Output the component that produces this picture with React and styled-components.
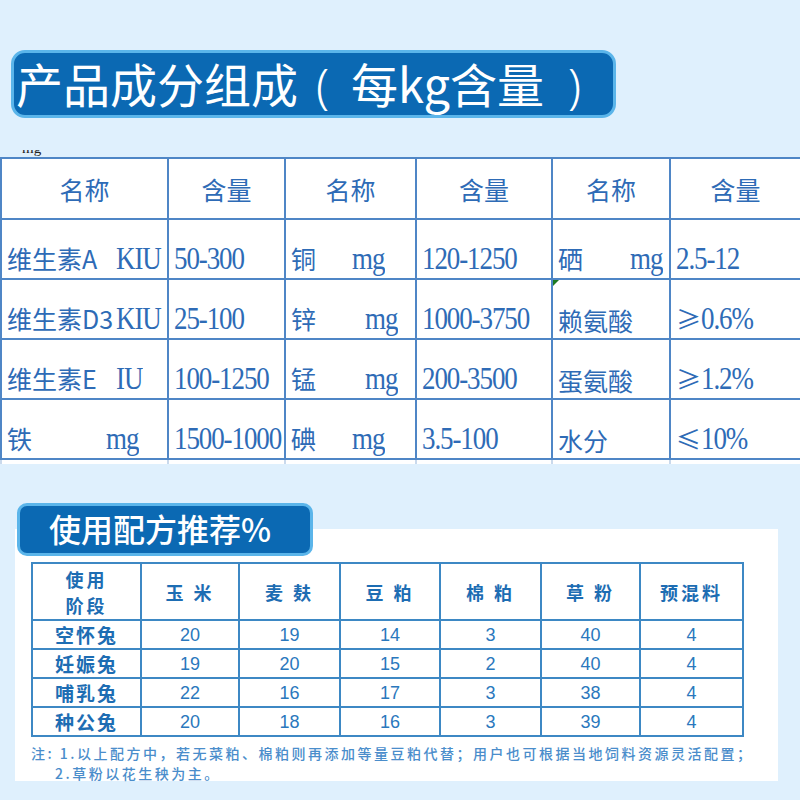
import React from 'react'
import styled, { createGlobalStyle } from 'styled-components'

const GlobalStyle = createGlobalStyle`
  html, body {
    margin: 0;
    padding: 0;
    background: #dff0fd;
  }
  body {
    font-family: "Noto Sans CJK SC", "Noto Sans", sans-serif;
  }
`

const Page = styled.div`
  width: 800px;
  height: 800px;
  overflow: hidden;
  box-sizing: border-box;
  padding-top: 50px;
  background: #dff0fd;
`

const TitleBanner = styled.h1`
  margin: 0 0 0 11px;
  width: 605px;
  height: 68px;
  box-sizing: border-box;
  padding-left: 2px;
  background: #0b69b3;
  border: 3px solid #5bb5ea;
  border-radius: 14px;
  color: #fff;
  font-size: 47px;
  font-weight: 400;
  line-height: 60px;
  white-space: nowrap;
`

const Paren = styled.span`
  display: inline-block;
  margin: ${p => (p.close ? '0 0 0 24px' : '0 22px 0 18px')};
  font-family: "Noto Sans", sans-serif;
  font-weight: 300;
`

const ClipStrip = styled.div`
  height: 7px;
  margin-top: 32px;
  overflow: hidden;
  padding-left: 22px;
  span {
    display: block;
    margin-top: -10px;
    font-family: "Liberation Serif", serif;
    font-size: 15px;
    line-height: 16px;
    color: #222;
  }
`

const Sheet = styled.table`
  width: 800px;
  border-collapse: collapse;
  table-layout: fixed;
  background: #fff;
  color: #2e6bb6;
`

const HeadCell = styled.td`
  height: 59px;
  padding: 0;
  border: 2px solid #4f86c6;
  text-align: center;
  font-size: 25px;
  line-height: 30px;
`

const Cell = styled.td`
  position: relative;
  height: 55px;
  padding: 0 0 3px 5px;
  border: 2px solid #4f86c6;
  vertical-align: bottom;
  font-size: 25px;
  line-height: 30px;
  white-space: nowrap;
  overflow: hidden;
`

const TailCell = styled.td`
  height: 4px;
  padding: 0;
  border-left: 2px solid #c9d9ec;
  border-right: 2px solid #c9d9ec;
`

const Label = styled.span`
  display: inline-block;
  width: ${p => p.w}px;
`

const Num = styled.span`
  display: inline-block;
  font-family: "Liberation Serif", serif;
  font-size: 27px;
  letter-spacing: -1.1px;
  transform: scaleY(1.2);
  transform-origin: 50% 80%;
`

const Flag = styled.i`
  position: absolute;
  top: 0;
  left: 0;
  width: 0;
  height: 0;
  border-top: 6px solid #1d7a22;
  border-right: 6px solid transparent;
`

const SubBanner = styled.h2`
  position: relative;
  z-index: 1;
  margin: 39px 0 -27px 17px;
  width: 296px;
  height: 53px;
  box-sizing: border-box;
  padding-left: 29px;
  background: #0b69b3;
  border: 3px solid #5bb5ea;
  border-radius: 10px;
  color: #fff;
  font-size: 32px;
  font-weight: 500;
  line-height: 45px;
  white-space: nowrap;
`

const Panel = styled.div`
  margin-left: 15px;
  width: 763px;
  height: 252px;
  box-sizing: border-box;
  padding: 33px 0 0 16px;
  background: #fff;
`

const Recipe = styled.table`
  width: 711px;
  border-collapse: collapse;
  table-layout: fixed;
  color: #1d6db3;
`

const RHead = styled.th`
  height: 55px;
  padding: 0;
  border: 2px solid #3d88c4;
  font-size: 18px;
  font-weight: 700;
  line-height: 26px;
  letter-spacing: 3px;
  white-space: pre-line;
`

const RStage = styled.td`
  height: 27px;
  padding: 0;
  border: 2px solid #3d88c4;
  text-align: center;
  font-size: 19px;
  font-weight: 700;
  letter-spacing: 2px;
  line-height: 24px;
`

const RVal = styled.td`
  height: 27px;
  padding: 0;
  border: 2px solid #3d88c4;
  text-align: center;
  font-family: "Liberation Sans", sans-serif;
  font-size: 18px;
  line-height: 24px;
  color: #2a78bd;
`

const Notes = styled.div`
  margin-top: 6px;
  color: #4a8dcb;
  font-size: 14px;
  font-weight: 500;
  letter-spacing: 2.5px;
  line-height: 20px;
  white-space: nowrap;
  p {
    margin: 0;
  }
  p + p {
    padding-left: 24px;
  }
`

const widths = [167, 117, 131, 136, 118, 131]

const rows = [
  [
    { n: '维生素A', u: 'KIU', w: 109 }, '50-300',
    { n: '铜', u: 'mg', w: 61 }, '120-1250',
    { n: '硒', u: 'mg', w: 72 }, '2.5-12',
  ],
  [
    { n: '维生素D3', u: 'KIU', w: 109 }, '25-100',
    { n: '锌', u: 'mg', w: 74 }, '1000-3750',
    { n: '赖氨酸', flag: true }, { ge: '≥', v: '0.6%' },
  ],
  [
    { n: '维生素E', u: 'IU', w: 109 }, '100-1250',
    { n: '锰', u: 'mg', w: 74 }, '200-3500',
    { n: '蛋氨酸' }, { ge: '≥', v: '1.2%' },
  ],
  [
    { n: '铁', u: 'mg', w: 99 }, '1500-1000',
    { n: '碘', u: 'mg', w: 61 }, '3.5-100',
    { n: '水分' }, { ge: '≤', v: '10%' },
  ],
]

const recipeWidths = [109, 98, 101, 100, 101, 99, 103]
const recipeHead = ['使用\n阶段', '玉 米', '麦 麸', '豆 粕', '棉 粕', '草 粉', '预混料']
const recipe = [
  ['空怀兔', 20, 19, 14, 3, 40, 4],
  ['妊娠兔', 19, 20, 15, 2, 40, 4],
  ['哺乳兔', 22, 16, 17, 3, 38, 4],
  ['种公兔', 20, 18, 16, 3, 39, 4],
]

function SheetCell({ item }) {
  if (typeof item === 'string') {
    return <Cell><Num>{item}</Num></Cell>
  }
  if (item.ge) {
    return <Cell>{item.ge}<Num>{item.v}</Num></Cell>
  }
  return (
    <Cell>
      {item.flag && <Flag />}
      {item.u ? <Label w={item.w}>{item.n}</Label> : item.n}
      {item.u && <Num>{item.u}</Num>}
    </Cell>
  )
}

export default function App() {
  return (
    <Page>
      <GlobalStyle />
      <TitleBanner>
        产品成分组成<Paren>(</Paren>每kg含量<Paren close>)</Paren>
      </TitleBanner>
      <ClipStrip><span>mg</span></ClipStrip>
      <Sheet>
        <colgroup>
          {widths.map((w, i) => <col key={i} style={{ width: w }} />)}
        </colgroup>
        <tbody>
          <tr>
            {['名称', '含量', '名称', '含量', '名称', '含量'].map((h, i) => (
              <HeadCell key={i}>{h}</HeadCell>
            ))}
          </tr>
          {rows.map((r, i) => (
            <tr key={i}>
              {r.map((c, j) => <SheetCell key={j} item={c} />)}
            </tr>
          ))}
          <tr>
            {widths.map((_, i) => <TailCell key={i} />)}
          </tr>
        </tbody>
      </Sheet>

      <SubBanner>使用配方推荐%</SubBanner>
      <Panel>
        <Recipe>
          <colgroup>
            {recipeWidths.map((w, i) => <col key={i} style={{ width: w }} />)}
          </colgroup>
          <thead>
            <tr>
              {recipeHead.map((h, i) => <RHead key={i}>{h}</RHead>)}
            </tr>
          </thead>
          <tbody>
            {recipe.map((r) => (
              <tr key={r[0]}>
                <RStage>{r[0]}</RStage>
                {r.slice(1).map((v, j) => <RVal key={j}>{v}</RVal>)}
              </tr>
            ))}
          </tbody>
        </Recipe>
        <Notes>
          <p>注: 1.以上配方中，若无菜粕、棉粕则再添加等量豆粕代替；用户也可根据当地饲料资源灵活配置；</p>
          <p>2.草粉以花生秧为主。</p>
        </Notes>
      </Panel>
    </Page>
  )
}
